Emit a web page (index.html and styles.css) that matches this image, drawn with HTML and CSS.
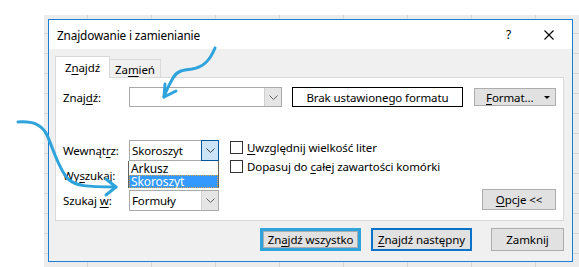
FILE: index.html
```html
<!DOCTYPE html>
<html lang="pl">
<head>
<meta charset="utf-8">
<title>Znajdowanie i zamienianie</title>
<link rel="stylesheet" href="styles.css">
</head>
<body>
<div class="stage">
  <div class="dialog">
    <div class="titlebar">
      <span class="title">Znajdowanie i zamienianie</span>
      <span class="help">?</span>
      <svg class="close" width="10" height="10" viewBox="0 0 10 10"><path d="M0.5 0.5 L9.5 9.5 M9.5 0.5 L0.5 9.5" stroke="#000" stroke-width="1.1" fill="none"/></svg>
    </div>
    <div class="body">
      <div class="tabs">
        <div class="tab active">Z<span class="acc">n</span>ajdź</div>
        <div class="tab">Za<span class="acc">m</span>ień</div>
      </div>
      <div class="panel">
        <div class="row1">
          <span class="label">Znaj<span class="acc">d</span>ź:</span>
          <div class="combo wide">
            <span class="combo-text"></span>
            <span class="drop"><svg width="9" height="5" viewBox="0 0 9 5"><path d="M0.5 0.5 L4.5 4.5 L8.5 0.5" stroke="#606060" fill="none"/></svg></span>
          </div>
          <div class="fmtbox">Brak ustawionego formatu</div>
          <div class="btn fmtbtn"><span><span class="acc">F</span>ormat...</span><svg width="6" height="3" viewBox="0 0 6 3"><path d="M0 0 L6 0 L3 3 Z" fill="#000"/></svg></div>
        </div>
        <div class="mid">
          <div class="fields">
            <div class="frow">
              <span class="label">Wewnąt<span class="acc">r</span>z:</span>
              <div class="combo">
                <span class="combo-text">Skoroszyt</span>
                <span class="drop open"><svg width="9" height="5" viewBox="0 0 9 5"><path d="M0.5 0.5 L4.5 4.5 L8.5 0.5" stroke="#404040" fill="none"/></svg></span>
              </div>
            </div>
            <div class="frow">
              <span class="label">Wy<span class="acc">s</span>zukaj:</span>
              <div class="combo hidden"></div>
            </div>
            <div class="frow">
              <span class="label">Szukaj <span class="acc">w</span>:</span>
              <div class="combo">
                <span class="combo-text">Formuły</span>
                <span class="drop"><svg width="9" height="5" viewBox="0 0 9 5"><path d="M0.5 0.5 L4.5 4.5 L8.5 0.5" stroke="#606060" fill="none"/></svg></span>
              </div>
            </div>
          </div>
          <div class="checks">
            <label class="check"><span class="box"></span><span><span class="acc">U</span>względnij wielkość liter</span></label>
            <label class="check"><span class="box"></span><span>Dopasuj do <span class="acc">c</span>ałej zawartości komórki</span></label>
          </div>
          <div class="btn opts"><span><span class="acc">O</span>pcje &lt;&lt;</span></div>
        </div>
        <div class="list">
          <div class="item">Arkusz</div>
          <div class="item sel">Skoroszyt</div>
        </div>
      </div>
      <div class="buttons">
        <div class="btn big marked">Zn<span class="acc">a</span>jdź wszystko</div>
        <div class="btn big default"><span class="acc">Z</span>najdź następny</div>
        <div class="btn close-btn">Zamknij</div>
      </div>
    </div>
  </div>
</div>
<svg class="arrows" width="579" height="267" viewBox="0 0 579 267">
  <g stroke="#2ea3dc" stroke-width="3" fill="none" stroke-linecap="round" stroke-linejoin="round">
    <path d="M215 48 C210 60 204 67 192 69 C182 70 177 71 173 78 C169 85 166 91 164 97"/>
    <path d="M165 84 L164 97 L176 91"/>
    <path d="M18 122 C34 121 42 125 47 135 C53 148 58 168 68 179 C76 186 86 187 116 187"/>
    <path d="M106 179 L116 187 L106 195"/>
  </g>
</svg>
</body>
</html>
```

FILE: styles.css
```css
* { box-sizing: border-box; }

body {
  margin: 0;
  width: 579px;
  height: 267px;
  background: #ffffff;
  font-family: "Noto Sans", "Liberation Sans", sans-serif;
  font-size: 11.5px;
  letter-spacing: -0.1px;
  color: #000;
  position: relative;
  overflow: hidden;
}

.stage {
  margin: 15px 0 0 44px;
  width: 535px;
  height: 252px;
  padding: 4px 6px 5px 4px;
  background-color: #ececec;
  background-image:
    linear-gradient(to right, #d6d6d6 1px, transparent 1px),
    linear-gradient(to bottom, #d6d6d6 1px, transparent 1px);
  background-size: 64px 20px;
  background-position: 43px 18px;
}

.dialog {
  width: 525px;
  height: 243px;
  border: 1px solid #1a7fd4;
  background: #f0f0f0;
  display: flex;
  flex-direction: column;
}

.titlebar {
  height: 29px;
  background: #fff;
  display: flex;
  align-items: center;
  padding-left: 8px;
  flex: none;
}

.title {
  font-size: 11.8px;
  letter-spacing: -0.15px;
  flex: 1;
  padding-top: 1px;
}

.help {
  font-size: 12px;
  margin-right: 33px;
}

.close { margin-right: 18px; }

.body {
  padding: 7px 7px 0 6px;
}

.acc {
  text-decoration: underline;
  text-underline-offset: 2px;
}

.tabs {
  display: flex;
  align-items: flex-end;
  height: 21px;
}

.tab {
  height: 18px;
  width: 51px;
  border: 1px solid #d9d9d9;
  border-bottom: none;
  border-left: none;
  background: #f0f0f0;
  display: flex;
  align-items: center;
  justify-content: center;
  padding-top: 1px;
}

.tab.active {
  width: 55px;
  height: 22px;
  margin-bottom: -1px;
  background: #fff;
  border-left: 1px solid #d9d9d9;
  position: relative;
  z-index: 1;
  padding-top: 0;
}

.panel {
  width: 509px;
  height: 144px;
  border: 1px solid #d9d9d9;
  background: #fff;
  position: relative;
  padding: 9px 7px 0 7px;
}

.row1 {
  display: flex;
  align-items: center;
  height: 20px;
}

.label {
  width: 66px;
  flex: none;
  white-space: nowrap;
}

.combo {
  width: 90px;
  height: 21px;
  border: 1px solid #a9a9a9;
  background: #fff;
  display: flex;
  align-items: stretch;
  flex: none;
}

.combo.wide {
  width: 153px;
  height: 20px;
}

.combo.hidden { visibility: hidden; }

.combo-text {
  flex: 1;
  display: flex;
  align-items: center;
  padding-left: 2px;
}

.drop {
  width: 17px;
  background: #e5e5e5;
  border-left: 1px solid #d0d0d0;
  display: flex;
  align-items: center;
  justify-content: center;
}

.drop.open {
  background: #cce4f7;
  border: 1px solid #005499;
  margin: -1px -1px -1px 0;
  width: 18px;
}

.fmtbox {
  margin-left: 10px;
  width: 171px;
  height: 20px;
  border: 1px solid #000;
  display: flex;
  align-items: center;
  justify-content: center;
  flex: none;
}

.btn {
  background: #e1e1e1;
  border: 1px solid #adadad;
  display: flex;
  align-items: center;
  justify-content: center;
  flex: none;
}

.fmtbtn {
  margin-left: 11px;
  width: 82px;
  height: 18px;
  justify-content: space-between;
  padding: 0 5px 0 11px;
}

.mid {
  display: flex;
  margin-top: 33px;
}

.fields {
  display: flex;
  flex-direction: column;
  gap: 4px;
}

.frow {
  display: flex;
  align-items: center;
}

.checks {
  margin-left: 11px;
  padding-top: 1px;
  display: flex;
  flex-direction: column;
  gap: 6px;
}

.check {
  display: flex;
  align-items: center;
  gap: 4px;
  height: 13px;
}

.box {
  width: 13px;
  height: 13px;
  border: 1px solid #333;
  background: #fff;
  flex: none;
}

.opts {
  margin-left: auto;
  align-self: flex-end;
  width: 74px;
  height: 21px;
  margin-bottom: 1px;
}

.list {
  position: absolute;
  left: 72px;
  top: 83px;
  width: 91px;
  height: 27px;
  border: 1px solid #646464;
  border-top: none;
  background: #fff;
  display: flex;
  flex-direction: column;
  padding-top: 1px;
}

.item {
  height: 13px;
  line-height: 13px;
  padding-left: 2px;
  font-size: 12px;
}

.item.sel {
  background: #3399ff;
  color: #fff;
  outline: 1px dotted #e0a050;
  outline-offset: -1px;
}

.buttons {
  display: flex;
  justify-content: flex-end;
  align-items: center;
  margin-top: 7px;
  width: 509px;
  height: 23px;
}

.big {
  width: 101px;
  height: 23px;
}

.marked {
  border: 3px solid #2ea3dc;
  box-shadow: inset 0 0 0 1px #adadad;
}

.default {
  margin-left: 10px;
  border: 2px solid #0a72c9;
}

.close-btn {
  margin-left: 19px;
  width: 73px;
  height: 23px;
}

.arrows {
  position: absolute;
  left: 0;
  top: 0;
  pointer-events: none;
}
```
